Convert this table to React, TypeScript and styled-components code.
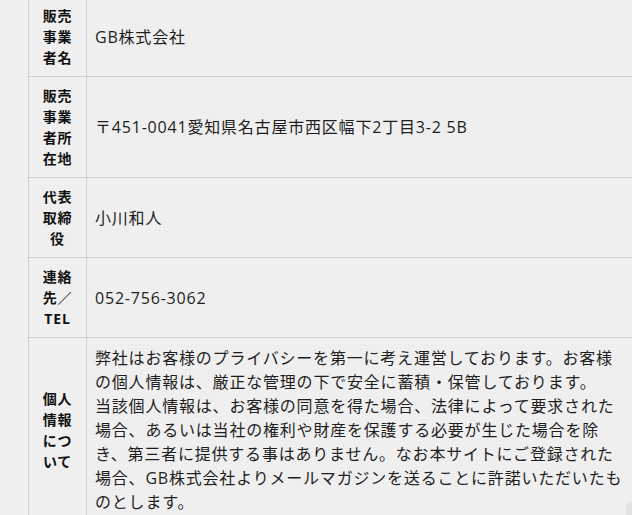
import { ReactElement } from 'react';
import styled, { createGlobalStyle } from 'styled-components';

const GlobalStyle = createGlobalStyle`
  html, body {
    margin: 0;
    padding: 0;
    background: #efefef;
    overflow: hidden;
  }
  body {
    font-family: 'Open Sans', 'Noto Sans CJK JP', sans-serif;
    color: #222;
  }
`;

const Page = styled.div`
  padding-left: 28px;
`;

const Table = styled.table`
  width: 640px;
  margin-top: -4px;
  border-collapse: collapse;
  letter-spacing: 0.05em;
`;

const Head = styled.th`
  width: 33px;
  padding: 8px 12px;
  border: 1px solid #cfcfcf;
  font-size: 14px;
  line-height: 21px;
  font-weight: 700;
  text-align: center;
  vertical-align: middle;
  color: #111;
`;

const Cell = styled.td`
  padding: 8px 8px;
  border: 1px solid #cfcfcf;
  font-size: 16px;
  line-height: 24px;
  font-weight: 400;
  white-space: nowrap;
  vertical-align: middle;
  color: #1e1e1e;
`;

const PageTop = styled.div`
  position: fixed;
  right: -30px;
  bottom: -30px;
  width: 36px;
  height: 44px;
  border-radius: 6px;
  background: #e4e4e4;
`;

interface Row {
  label: string;
  lines: string[];
}

const rows: Row[] = [
  { label: '販売事業者名', lines: ['GB株式会社'] },
  {
    label: '販売事業者所在地',
    lines: ['〒451-0041愛知県名古屋市西区幅下2丁目3-2 5B'],
  },
  { label: '代表取締役', lines: ['小川和人'] },
  { label: '連絡先／TEL', lines: ['052-756-3062'] },
  {
    label: '個人情報について',
    lines: [
      '弊社はお客様のプライバシーを第一に考え運営しております。お客様',
      'の個人情報は、厳正な管理の下で安全に蓄積・保管しております。',
      '当該個人情報は、お客様の同意を得た場合、法律によって要求された',
      '場合、あるいは当社の権利や財産を保護する必要が生じた場合を除',
      'き、第三者に提供する事はありません。なお本サイトにご登録された',
      '場合、GB株式会社よりメールマガジンを送ることに許諾いただいたも',
      'のとします。',
    ],
  },
];

const App = (): ReactElement => (
  <Page>
    <GlobalStyle />
    <Table>
      <tbody>
        {rows.map((row) => (
          <tr key={row.label}>
            <Head>{row.label}</Head>
            <Cell>
              {row.lines.map((line, i) => (
                <span key={i}>
                  {line}
                  {i < row.lines.length - 1 && <br />}
                </span>
              ))}
            </Cell>
          </tr>
        ))}
      </tbody>
    </Table>
    <PageTop />
  </Page>
);

export default App;
